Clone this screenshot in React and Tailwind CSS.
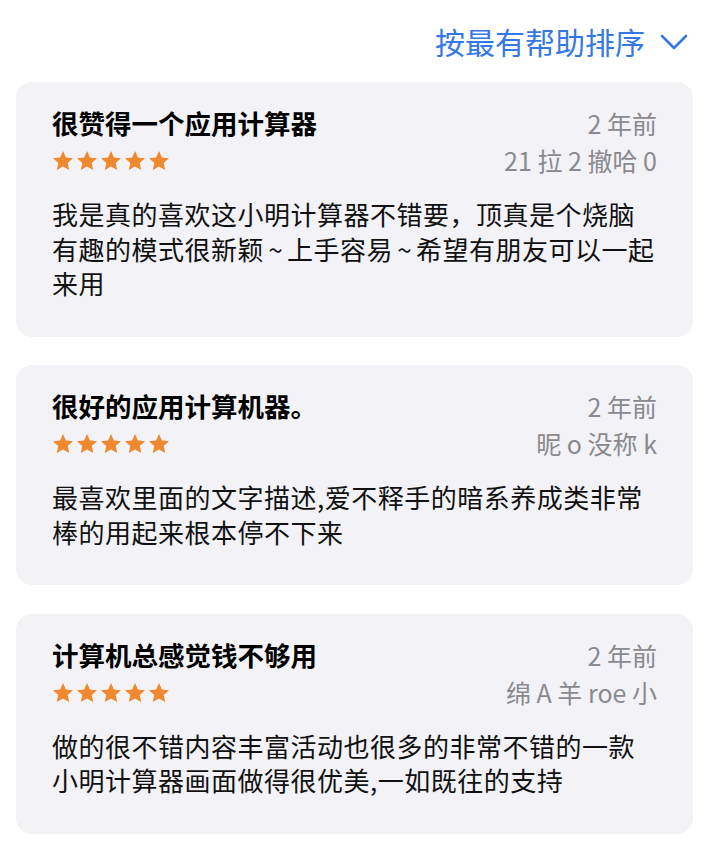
import React from "react";

const font = { fontFamily: '"Noto Sans CJK SC", "Noto Sans", sans-serif' };

function Star() {
  return (
    <svg width="22" height="22" viewBox="0 0 24 24" className="shrink-0">
      <path
        d="M12 1.2l3.2 7.1 7.7.8-5.8 5.2 1.7 7.6L12 17.9l-6.8 4 1.7-7.6L1.1 9.1l7.7-.8z"
        fill="#f0882f"
      />
    </svg>
  );
}

function Stars() {
  return (
    <div className="flex items-center gap-[2px] h-[42px]">
      <Star />
      <Star />
      <Star />
      <Star />
      <Star />
    </div>
  );
}

function Tilde() {
  return <span className="inline-block w-[23px] text-center tracking-normal">~</span>;
}

function Card({ title, date, name, children }) {
  return (
    <div className="bg-[#f2f2f7] rounded-[16px] pt-[24px] pb-[36px] px-[36px]">
      <div className="flex justify-between">
        <div className="flex flex-col">
          <div className="text-[26.5px] leading-[34px] font-bold text-black">{title}</div>
          <Stars />
        </div>
        <div className="flex flex-col items-end text-[#8a8a8e]">
          <div className="text-[25px] leading-[34px]">{date}</div>
          <div className="text-[25px] leading-[40px]">{name}</div>
        </div>
      </div>
      <div className="mt-[15px] text-[26px] leading-[34.5px] tracking-[0.5px] text-[#111111]">{children}</div>
    </div>
  );
}

export default function App() {
  return (
    <div className="w-[709px] min-h-[850px] bg-white" style={font}>
      <div className="flex justify-end items-center pt-[19px] pr-[21px] h-[64px]">
        <span className="text-[30px] leading-[45px] text-[#3478e6]">按最有帮助排序</span>
        <svg width="28" height="16" viewBox="0 0 28 16" className="ml-[15px]">
          <path d="M2 2l12 12 12-12" fill="none" stroke="#3478e6" strokeWidth="2.6" strokeLinecap="round" strokeLinejoin="round" />
        </svg>
      </div>
      <div className="flex flex-col gap-[28.5px] px-[16px] pt-[18px] pb-[16px]">
        <Card title="很赞得一个应用计算器" date="2 年前" name="21 拉 2 撤哈 0">
          我是真的喜欢这小明计算器不错要，顶真是个烧脑有趣的模式很新颖<Tilde />上手容易<Tilde />希望有朋友可以一起来用
        </Card>
        <Card title="很好的应用计算机器。" date="2 年前" name="昵 o 没称 k">
          最喜欢里面的文字描述,爱不释手的暗系养成类非常棒的用起来根本停不下来
        </Card>
        <Card title="计算机总感觉钱不够用" date="2 年前" name="绵 A 羊 roe 小">
          做的很不错内容丰富活动也很多的非常不错的一款小明计算器画面做得很优美,一如既往的支持
        </Card>
      </div>
    </div>
  );
}
